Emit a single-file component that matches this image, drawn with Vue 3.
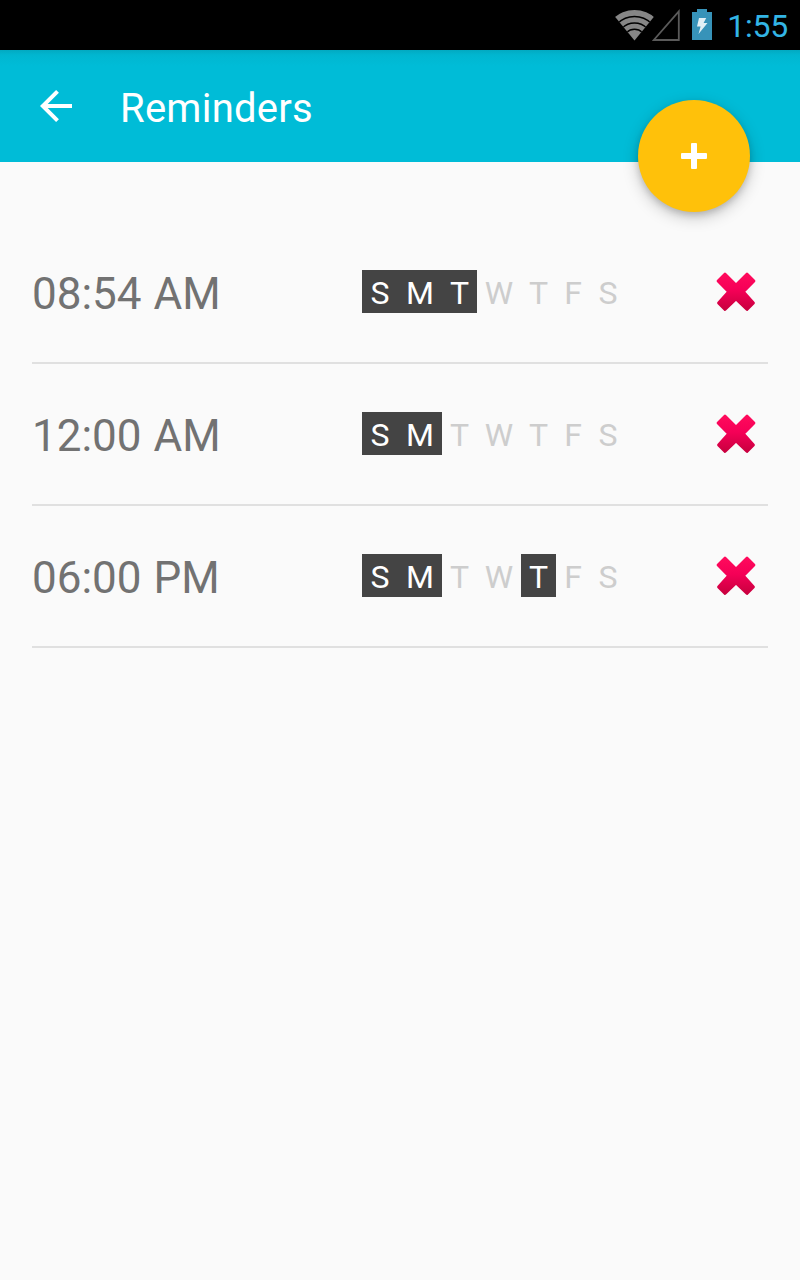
<script setup>
import { ref } from 'vue'

const days = ['S', 'M', 'T', 'W', 'T', 'F', 'S']

const reminders = ref([
  { id: 1, time: '08:54 AM', active: [0, 1, 2] },
  { id: 2, time: '12:00 AM', active: [0, 1] },
  { id: 3, time: '06:00 PM', active: [0, 1, 4] }
])

function toggleDay(reminder, day) {
  if (reminder.active.includes(day)) {
    reminder.active = reminder.active.filter(d => d !== day)
  } else {
    reminder.active.push(day)
  }
}

function removeReminder(id) {
  reminders.value = reminders.value.filter(r => r.id !== id)
}

function addReminder() {
  reminders.value.push({ id: Date.now(), time: '12:00 AM', active: [] })
}
</script>

<template>
  <div class="screen">
    <div class="status-bar">
      <svg class="wifi" width="40" height="31" viewBox="0 0 40 31">
        <defs>
          <clipPath id="wifi-fan">
            <path d="M19.5 30.5 L-1 5.5 V0 H40 V5.5 Z" />
          </clipPath>
        </defs>
        <g clip-path="url(#wifi-fan)">
          <circle cx="19.5" cy="30.5" r="30.5" fill="#868686" />
          <g fill="none" stroke="#000" stroke-width="1.4">
            <circle cx="19.5" cy="30.5" r="24" />
            <circle cx="19.5" cy="30.5" r="17.5" />
            <circle cx="19.5" cy="30.5" r="11.2" />
          </g>
        </g>
      </svg>
      <svg class="signal" width="30" height="32" viewBox="0 0 30 32">
        <path d="M1.8 31 H26.8 V2.5 Z" fill="none" stroke="#5a5a5a" stroke-width="1.8" />
      </svg>
      <svg class="battery" width="20" height="31" viewBox="0 0 20 31">
        <path d="M0 3 H5 V0 H15 V3 H20 V31 H0 Z" fill="#3793b9" />
        <path d="M7 9 H14.2 L11.6 14 H15.5 L6.5 25 L8.6 17.5 H5 Z" fill="#e1f0f6" />
      </svg>
      <span class="clock">1:55</span>
    </div>

    <header class="toolbar">
      <svg class="back" width="32" height="32" viewBox="0 0 32 32">
        <path d="M17.5 1.4 L2.8 16 L17.5 30.6 M2.8 16 H32" fill="none" stroke="#fff" stroke-width="4" />
      </svg>
      <h1>Reminders</h1>
      <button class="fab" @click="addReminder">
        <svg width="28" height="28" viewBox="0 0 28 28">
          <path d="M12 1 H16 Q17 1 17 2 V11 H26 Q27 11 27 12 V16 Q27 17 26 17 H17 V26 Q17 27 16 27 H12 Q11 27 11 26 V17 H2 Q1 17 1 16 V12 Q1 11 2 11 H11 V2 Q11 1 12 1 Z" fill="#fff" />
        </svg>
      </button>
    </header>

    <ul class="list">
      <li v-for="r in reminders" :key="r.id" class="reminder">
        <span class="time">{{ r.time }}</span>
        <div class="days">
          <span
            v-for="(d, i) in days"
            :key="i"
            class="day"
            :class="{ active: r.active.includes(i) }"
            @click="toggleDay(r, i)"
          >{{ d }}</span>
        </div>
        <button class="remove" @click="removeReminder(r.id)">
          <svg width="40" height="40" viewBox="0 0 40 40">
            <defs>
              <linearGradient :id="'cross-' + r.id" x1="0" y1="0" x2="0" y2="1">
                <stop offset="0" stop-color="#ff0a5c" />
                <stop offset="0.45" stop-color="#f50057" />
                <stop offset="1" stop-color="#c9003f" />
              </linearGradient>
            </defs>
            <path
              d="M9 2 L20 12.9 L31 2 L38 9 L27.4 19.8 L37.5 31 L31 37.6 L20 27 L9 37.6 L2.5 31 L12.6 19.8 L2 9 Z"
              :fill="'url(#cross-' + r.id + ')'"
              :stroke="'url(#cross-' + r.id + ')'"
              stroke-width="2.8"
              stroke-linejoin="round"
            />
          </svg>
        </button>
      </li>
    </ul>
  </div>
</template>

<style>
body {
  background: #fafafa;
}
</style>

<style scoped>
.screen {
  width: 800px;
  min-height: 1280px;
  background: #fafafa;
  font-family: Roboto, sans-serif;
}

.status-bar {
  display: flex;
  align-items: flex-start;
  box-sizing: border-box;
  height: 50px;
  padding: 9px 12px 0 0;
  justify-content: flex-end;
  background: #000;
}

.wifi {
  margin-top: 1px;
}

.signal {
  margin-left: -3px;
}

.battery {
  margin-left: 10px;
}

.clock {
  margin-left: 15px;
  font-size: 32px;
  line-height: 34px;
  letter-spacing: -0.25px;
  color: #33b5e5;
}

.toolbar {
  position: relative;
  display: flex;
  align-items: center;
  box-sizing: border-box;
  height: 112px;
  padding-left: 40px;
  background: linear-gradient(#02a9c1, #01b6d0 5px, #00bcd7 16px);
}

.toolbar h1 {
  margin: 6px 0 0 48px;
  font-size: 40px;
  font-weight: 400;
  line-height: 48px;
  letter-spacing: 0.25px;
  color: #fff;
}

.fab {
  position: absolute;
  right: 50px;
  bottom: -50px;
  display: flex;
  align-items: center;
  justify-content: center;
  width: 112px;
  height: 112px;
  padding: 0;
  border: 0;
  border-radius: 50%;
  background: #ffc10a;
  box-shadow: 0 5px 16px rgba(0, 0, 0, 0.22), 0 3px 6px rgba(0, 0, 0, 0.14);
  cursor: pointer;
}

.list {
  margin: 0;
  padding: 60px 32px 0;
  list-style: none;
}

.reminder {
  display: flex;
  align-items: center;
  box-sizing: border-box;
  height: 142px;
  padding-right: 12px;
  border-bottom: 2px solid #e0e0e0;
}

.time {
  box-sizing: border-box;
  width: 330px;
  padding-top: 4px;
  font-size: 44px;
  line-height: 52px;
  word-spacing: 1px;
  color: #727272;
}

.days {
  display: grid;
  grid-template-columns: 36px 44px 35px 44px 35px 34px 36px;
  margin-right: auto;
  padding-bottom: 1px;
}

.day {
  height: 43px;
  font-size: 32px;
  line-height: 46px;
  text-align: center;
  color: #cdcdcd;
  cursor: pointer;
}

.day.active {
  background: #444;
  color: #fff;
}

.remove {
  display: flex;
  padding: 0;
  border: 0;
  background: none;
  cursor: pointer;
}
</style>
